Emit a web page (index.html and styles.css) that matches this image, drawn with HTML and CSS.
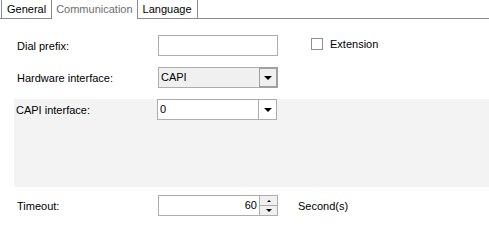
FILE: index.html
```html
<!DOCTYPE html>
<html lang="en">
<head>
    <meta charset="UTF-8">
    <title>Communication</title>
    <link rel="stylesheet" href="styles.css">
</head>
<body>
    <div class="tabs">
        <div class="tab">General</div>
        <div class="tab active">Communication</div>
        <div class="tab">Language</div>
    </div>

    <div class="page">
        <div class="row">
            <label class="label">Dial prefix:</label>
            <div class="textbox"></div>
            <div class="check">
                <span class="box"></span>
                <span>Extension</span>
            </div>
        </div>

        <div class="row">
            <label class="label">Hardware interface:</label>
            <div class="combo readonly">
                <span class="value">CAPI</span>
                <span class="drop"><span class="arrow"></span></span>
            </div>
        </div>

        <div class="panel">
            <div class="row">
                <label class="label">CAPI interface:</label>
                <div class="combo">
                    <span class="value">0</span>
                    <span class="drop"><span class="arrow"></span></span>
                </div>
            </div>
        </div>

        <div class="row timeout">
            <label class="label">Timeout:</label>
            <div class="spin">
                <span class="value">60</span>
                <span class="spin-buttons">
                    <span class="up"><span class="arrow-up"></span></span>
                    <span class="down"><span class="arrow"></span></span>
                </span>
            </div>
            <span class="unit">Second(s)</span>
        </div>
    </div>
</body>
</html>
```

FILE: styles.css
```css
body {
    margin: 0;
    background: #ffffff;
    font-family: 'Liberation Sans', Arial, sans-serif;
    font-size: 11px;
    color: #000;
}

.tabs {
    display: flex;
    height: 18px;
    border-bottom: 1px solid #8c8c8c;
    padding-left: 1px;
}

.tab {
    height: 18px;
    line-height: 18px;
    padding: 0 5px;
    border: 1px solid #8c8c8c;
    border-top: none;
    border-bottom: none;
    margin-left: -1px;
}

.tab:first-child {
    margin-left: 0;
}

.tab.active {
    background: #fff;
    color: #6d6d6d;
    height: 19px;
    margin-bottom: -1px;
    padding: 0 4px;
}

.page {
    padding-top: 16px;
}

.row {
    display: flex;
    align-items: center;
    height: 21px;
    margin-bottom: 11px;
    padding-left: 17px;
}

.label {
    width: 141px;
}

.textbox {
    box-sizing: border-box;
    width: 120px;
    height: 21px;
    border: 1px solid #adadad;
    background: #fff;
}

.check {
    display: flex;
    align-items: center;
    gap: 7px;
    margin-left: 33px;
    margin-top: -3px;
}

.box {
    box-sizing: border-box;
    width: 12px;
    height: 12px;
    border: 1px solid #8f8f8f;
    background: #fff;
}

.combo, .spin {
    box-sizing: border-box;
    display: flex;
    width: 120px;
    height: 21px;
    border: 1px solid #adadad;
    background: #fff;
}

.combo.readonly {
    background: #f0f0f0;
}

.combo .value {
    flex: 1;
    padding-left: 2px;
    line-height: 19px;
}

.drop {
    box-sizing: border-box;
    width: 18px;
    border-left: 1px solid #adadad;
    display: flex;
    align-items: center;
    justify-content: center;
}

.combo.readonly .drop {
    border: 2px solid #a0a0a0;
    border-left-width: 1px;
    margin: -1px -1px -1px 0;
    width: 19px;
    background: #f0f0f0;
}

.arrow {
    width: 0;
    height: 0;
    border-left: 4px solid transparent;
    border-right: 4px solid transparent;
    border-top: 4px solid #000;
}

.arrow-up {
    width: 0;
    height: 0;
    border-left: 2px solid transparent;
    border-right: 2px solid transparent;
    border-bottom: 2px solid #000;
}

.panel {
    background: #f3f3f3;
    margin-left: 14px;
    height: 88px;
    margin-bottom: 8px;
}

.panel .row {
    padding-left: 2px;
}

.spin .value {
    flex: 1;
    text-align: right;
    padding-right: 2px;
    line-height: 19px;
}

.spin-buttons {
    width: 17px;
    display: flex;
    flex-direction: column;
    border-left: 1px solid #adadad;
}

.spin-buttons .up,
.spin-buttons .down {
    flex: 1;
    display: flex;
    align-items: center;
    justify-content: center;
    background: #f0f0f0;
}

.spin-buttons .up {
    border-bottom: 1px solid #adadad;
}

.spin-buttons .down .arrow {
    border-left-width: 3px;
    border-right-width: 3px;
    border-top-width: 3px;
}

.unit {
    margin-left: 20px;
}
```
